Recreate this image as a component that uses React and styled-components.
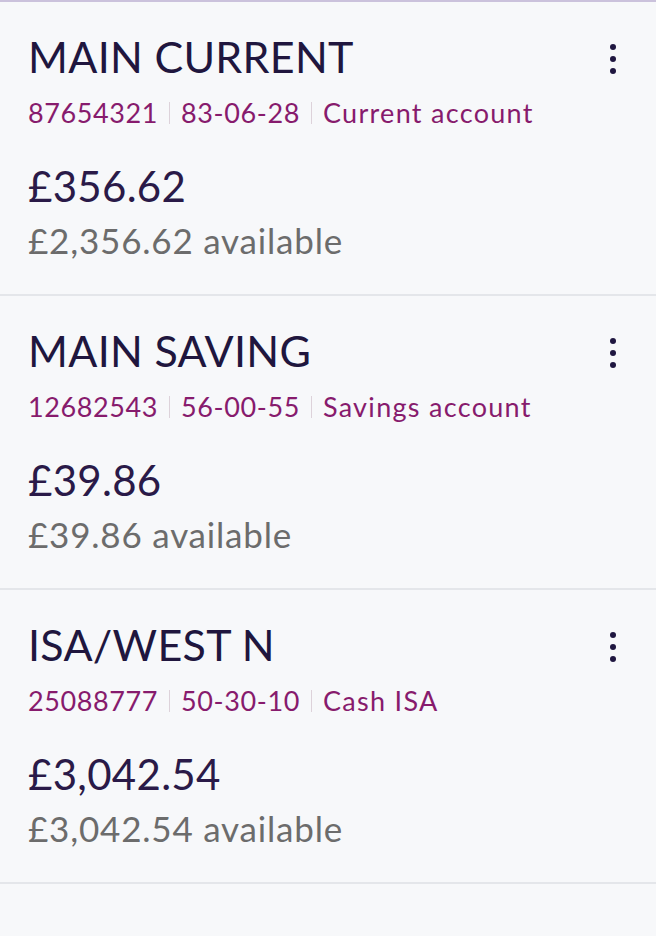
import React from "react";
import styled, { createGlobalStyle } from "styled-components";

const Global = createGlobalStyle`
  html, body { margin: 0; padding: 0; background: #f7f8fa; }
  body { font-family: Lato, "Noto Sans", sans-serif; -webkit-font-smoothing: antialiased; }
`;

const Page = styled.div`
  min-height: 936px;
  background: #f7f8fa;
  border-top: 2px solid #cbc2dc;
  box-sizing: border-box;
`;

const Card = styled.section`
  position: relative;
  height: 294px;
  box-sizing: border-box;
  padding: 29px 28px 0 28px;
  border-bottom: 2px solid #e4e6ea;
`;

const Title = styled.h2`
  margin: 0;
  font-size: 43px;
  line-height: 52px;
  font-weight: 400;
  color: #20163e;
  letter-spacing: 0.3px;
`;

const Meta = styled.div`
  display: flex;
  align-items: center;
  margin-top: 13px;
  font-size: 27px;
  line-height: 34px;
  letter-spacing: 0.6px;
  color: #871b6d;
`;

const MetaText = styled.span`
  letter-spacing: ${(p) => (p.$wide ? "1.3px" : "0.6px")};
`;

const Sep = styled.span`
  display: inline-block;
  width: 1px;
  height: 22px;
  background: #ddd2da;
  margin: 0 11px;
`;

const Amount = styled.div`
  margin-top: 31px;
  font-size: 42px;
  line-height: 50px;
  letter-spacing: 0.3px;
  color: #2a1a48;
`;

const Available = styled.div`
  margin-top: 8px;
  font-size: 35px;
  line-height: 42px;
  letter-spacing: 0.8px;
  color: #6c6c6c;
`;

const MenuButton = styled.button`
  position: absolute;
  top: 37px;
  right: 30px;
  width: 26px;
  height: 40px;
  padding: 0;
  border: 0;
  background: transparent;
  display: flex;
  flex-direction: column;
  align-items: center;
  justify-content: center;
  gap: 6px;
`;

const Dot = styled.span`
  width: 6px;
  height: 6px;
  border-radius: 50%;
  background: #1f1640;
`;

const accounts = [
  { name: "MAIN CURRENT", number: "87654321", sort: "83-06-28", type: "Current account", balance: "£356.62", available: "£2,356.62" },
  { name: "MAIN SAVING", number: "12682543", sort: "56-00-55", type: "Savings account", balance: "£39.86", available: "£39.86" },
  { name: "ISA/WEST N", number: "25088777", sort: "50-30-10", type: "Cash ISA", balance: "£3,042.54", available: "£3,042.54" },
];

export default function App() {
  return (
    <>
      <Global />
      <Page>
        {accounts.map((a) => (
          <Card key={a.number}>
            <Title>{a.name}</Title>
            <Meta>
              <MetaText>{a.number}</MetaText>
              <Sep />
              <MetaText>{a.sort}</MetaText>
              <Sep />
              <MetaText $wide>{a.type}</MetaText>
            </Meta>
            <Amount>{a.balance}</Amount>
            <Available>{a.available} available</Available>
            <MenuButton aria-label="More options">
              <Dot />
              <Dot />
              <Dot />
            </MenuButton>
          </Card>
        ))}
      </Page>
    </>
  );
}
